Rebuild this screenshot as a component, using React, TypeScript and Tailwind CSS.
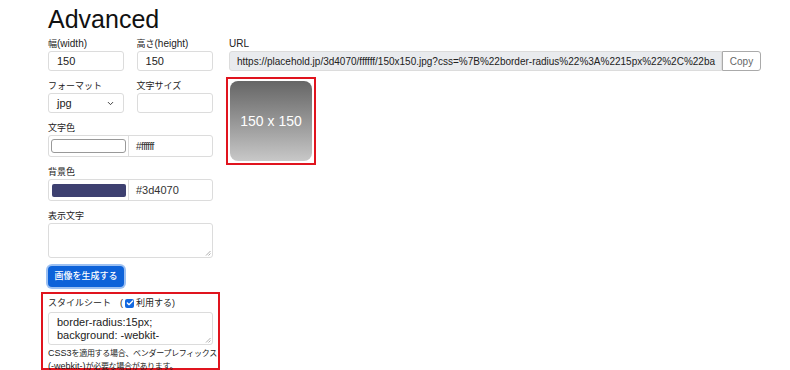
import { ChevronDown, Check } from "lucide-react";

const font = { fontFamily: '"Liberation Sans", "Noto Sans CJK JP", sans-serif' };

function Label({ children }: { children: React.ReactNode }) {
  return <div className="text-[9px] leading-[12px] text-[#222] mb-[1px] whitespace-nowrap">{children}</div>;
}

function Field({ value }: { value?: string }) {
  return (
    <div className="h-[20px] border border-[#dcdcdc] rounded-[3px] bg-white px-[8px] flex items-center text-[11px] text-[#222]">
      {value}
    </div>
  );
}

function Grip() {
  return (
    <svg className="absolute right-[1px] bottom-[1px]" width="6" height="6" viewBox="0 0 6 6">
      <path d="M1 5.5 L5.5 1 M3.5 5.5 L5.5 3.5" stroke="#999" strokeWidth="0.8" />
    </svg>
  );
}

export default function App() {
  return (
    <div className="w-[790px] h-[370px] bg-white overflow-hidden" style={font}>
      <div className="pl-[41px] pt-[4px]">
        <h1 className="pl-[7px] text-[25px] leading-[30px] font-light text-[#111]">Advanced</h1>
        <div className="flex gap-[6px] mt-[4px]">
          {/* left form column */}
          <div className="w-[179px] flex-none">
            <div className="px-[7px] flex flex-col">
              <div className="flex gap-[13px]">
                <div className="w-[77px]">
                  <Label>
                    幅<span className="text-[10px]">(width)</span>
                  </Label>
                  <Field value="150" />
                </div>
                <div className="w-[78px]">
                  <Label>
                    高さ<span className="text-[10px]">(height)</span>
                  </Label>
                  <Field value="150" />
                </div>
              </div>
              <div className="flex gap-[13px] mt-[9px]">
                <div className="w-[77px]">
                  <Label>フォーマット</Label>
                  <div className="h-[20px] border border-[#dcdcdc] rounded-[3px] bg-white px-[8px] flex items-center justify-between text-[11px] text-[#222]">
                    jpg
                    <ChevronDown size={9} strokeWidth={2.5} className="text-[#333]" />
                  </div>
                </div>
                <div className="w-[78px]">
                  <Label>文字サイズ</Label>
                  <Field />
                </div>
              </div>
              <div className="mt-[9px]">
                <Label>文字色</Label>
                <div className="flex h-[22px] border border-[#dcdcdc] rounded-[3px]">
                  <div className="w-[80px] border-r border-[#dcdcdc] flex items-center justify-center">
                    <div className="w-[75px] h-[14px] border border-[#999] rounded-[3px] bg-white" />
                  </div>
                  <div className="flex-1 flex items-center px-[7px] text-[10px] text-[#333] tracking-[-0.5px]">#ffffff</div>
                </div>
              </div>
              <div className="mt-[9px]">
                <Label>背景色</Label>
                <div className="flex h-[22px] border border-[#dcdcdc] rounded-[3px]">
                  <div className="w-[80px] border-r border-[#dcdcdc] flex items-center justify-center">
                    <div className="w-[74px] h-[13px] rounded-[2px] bg-[#3d4070]" />
                  </div>
                  <div className="flex-1 flex items-center px-[7px] text-[11px] text-[#333]">#3d4070</div>
                </div>
              </div>
              <div className="mt-[9px]">
                <Label>表示文字</Label>
                <div className="relative h-[35px] border border-[#dcdcdc] rounded-[3px]">
                  <Grip />
                </div>
              </div>
              <button className="mt-[8px] w-[76px] h-[21px] rounded-[4px] bg-[#0d62d9] text-white text-[9px] font-medium ring-2 ring-[#9cc0f2] self-start">
                画像を生成する
              </button>
            </div>
            <div className="mt-[5px] h-[78px] border-2 border-[#e0141e] px-[5px] pt-[2px]">
              <div className="flex items-center text-[9px] leading-[14px] text-[#222] whitespace-nowrap">
                <span>スタイルシート</span>
                <span className="ml-[9px]">(</span>
                <span className="mx-[2px] w-[9px] h-[9px] rounded-[2px] bg-[#1268e0] flex items-center justify-center">
                  <Check size={8} strokeWidth={4} className="text-white" />
                </span>
                <span>利用する)</span>
              </div>
              <div className="relative mt-[2px] h-[33px] border border-[#dcdcdc] rounded-[3px] px-[8px] pt-[3px] text-[11px] leading-[13px] text-[#222] overflow-hidden">
                <div>border-radius:15px;</div>
                <div>background: -webkit-</div>
                <Grip />
              </div>
              <div className="mt-[2px] text-[8px] leading-[12px] text-[#222] whitespace-nowrap tracking-[-0.3px]">
                <span className="text-[9px] tracking-normal">CSS3</span>を適用する場合、ベンダープレフィックス
                <br />
                <span className="text-[9px] tracking-normal">(-webkit-)</span>が必要な場合があります。
              </div>
            </div>
          </div>

          {/* right column */}
          <div className="flex-1">
            <div className="pl-[3px]">
              <Label>
                <span className="text-[10px]">URL</span>
              </Label>
              <div className="flex">
                <div className="w-[493px] flex-none h-[20px] bg-[#e9ebee] border border-[#dcdcdc] rounded-l-[3px] px-[7px] flex items-center text-[10px] text-[#222] whitespace-nowrap overflow-hidden">
                  https://placehold.jp/3d4070/ffffff/150x150.jpg?css=%7B%22border-radius%22%3A%2215px%22%2C%22ba
                </div>
                <div className="w-[39px] flex-none h-[20px] border border-[#aaa] rounded-r-[3px] flex items-center justify-center text-[10px] text-[#666]">
                  Copy
                </div>
              </div>
            </div>
            <div className="mt-[6px] w-[90px] h-[88px] border-2 border-[#e0141e] p-[2px]">
              <div className="w-[82px] h-[80px] rounded-[8px] bg-gradient-to-b from-[#666666] to-[#c8c8c8] flex items-center justify-center text-white text-[14px]">
                150 x 150
              </div>
            </div>
          </div>
        </div>
      </div>
    </div>
  );
}
